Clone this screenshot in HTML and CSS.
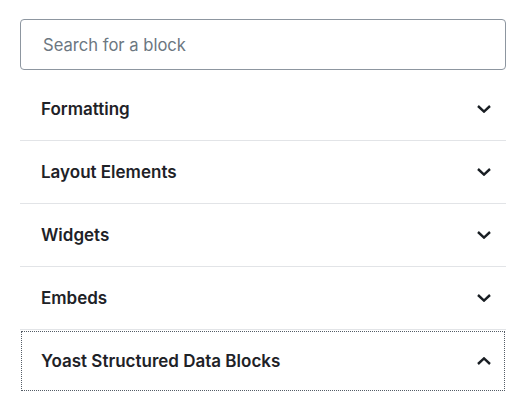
FILE: index.html
```html
<!DOCTYPE html>
<html>
<head>
<meta charset="utf-8">
<link rel="stylesheet" href="styles.css">
</head>
<body>
<div class="inserter">
  <div class="search"><input class="search-input" type="text" placeholder="Search for a block"></div>
  <div class="panels">
    <div class="panel first"><button class="panel-toggle"><span class="title">Formatting</span><svg class="chev" width="14" height="8" viewBox="0 0 14 8"><polyline points="1,1 7,6.6 13,1" fill="none" stroke="#191e23" stroke-width="2.4"/></svg></button></div>
    <div class="panel"><button class="panel-toggle"><span class="title">Layout Elements</span><svg class="chev" width="14" height="8" viewBox="0 0 14 8"><polyline points="1,1 7,6.6 13,1" fill="none" stroke="#191e23" stroke-width="2.4"/></svg></button></div>
    <div class="panel"><button class="panel-toggle"><span class="title">Widgets</span><svg class="chev" width="14" height="8" viewBox="0 0 14 8"><polyline points="1,1 7,6.6 13,1" fill="none" stroke="#191e23" stroke-width="2.4"/></svg></button></div>
    <div class="panel"><button class="panel-toggle"><span class="title">Embeds</span><svg class="chev" width="14" height="8" viewBox="0 0 14 8"><polyline points="1,1 7,6.6 13,1" fill="none" stroke="#191e23" stroke-width="2.4"/></svg></button></div>
    <div class="panel"><button class="panel-toggle focused"><span class="title">Yoast Structured Data Blocks</span><svg class="chev" width="14" height="8" viewBox="0 0 14 8"><polyline points="1,7 7,1.4 13,7" fill="none" stroke="#191e23" stroke-width="2.4"/></svg></button></div>
  </div>
</div>
</body>
</html>
```
FILE: styles.css
```css
html, body {
  margin: 0;
  padding: 0;
  background: #fff;
}
body {
  font-family: Inter, "Noto Sans", "Liberation Sans", sans-serif;
}
.inserter {
  width: 486px;
  margin-left: 20px;
  padding-top: 19px;
}
.search {
  margin-bottom: 7px;
}
.search-input {
  box-sizing: border-box;
  display: block;
  width: 100%;
  height: 51px;
  border: 1px solid #8d96a0;
  border-radius: 4px;
  padding: 0 22px;
  font-family: Inter, "Noto Sans", "Liberation Sans", sans-serif;
  font-size: 16.6px;
  color: #191e23;
  background: #fff;
  outline: none;
}
.search-input::placeholder {
  color: #6c7781;
  opacity: 1;
}
.panel {
  border-top: 1px solid #e2e4e7;
}
.panel.first {
  border-top: 1px solid transparent;
}
.panel-toggle {
  display: flex;
  align-items: center;
  justify-content: space-between;
  width: 100%;
  height: 62px;
  box-sizing: border-box;
  padding: 0 15px 0 21px;
  margin: 0;
  border: none;
  background: transparent;
  font-family: Inter, "Noto Sans", "Liberation Sans", sans-serif;
  font-size: 17px;
  font-weight: 600;
  color: #1e2227;
  text-align: left;
}
.panel-toggle.focused {
  outline: 1px dotted #555d66;
  outline-offset: -2px;
}
.chev {
  display: block;
}
```
